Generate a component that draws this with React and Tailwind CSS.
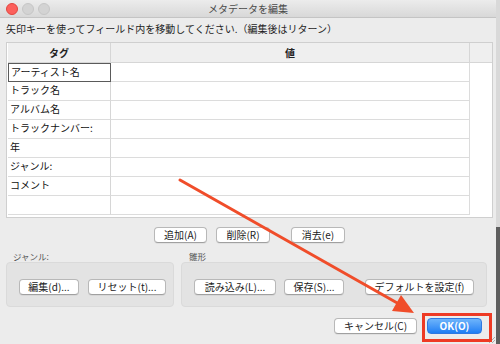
import React from 'react';

const rows = ['アーティスト名', 'トラック名', 'アルバム名', 'トラックナンバー:', '年', 'ジャンル:', 'コメント', ''];

function Btn({ label, className = '' }) {
  return (
    <button
      className={`h-[16px] rounded-[4px] border border-[#b8b8b8] border-b-[#a0a0a0] bg-white text-[10px] leading-none text-[#222] shadow-[0_1px_0_rgba(0,0,0,0.05)] ${className}`}
    >
      {label}
    </button>
  );
}

export default function App() {
  return (
    <div
      className="relative flex h-[344px] w-[500px] overflow-hidden bg-[#ececec]"
      style={{ fontFamily: '"Noto Sans CJK JP", "Noto Sans", sans-serif' }}
    >
      <div className="flex w-[496px] flex-col">
        {/* Title bar */}
        <div className="relative flex h-[18px] items-center rounded-tr-[5px] border-b border-[#c4c4c4] bg-gradient-to-b from-[#ececec] to-[#d8d8d8] pl-[6px]">
          <div className="flex gap-[4px]">
            <span className="h-[12px] w-[12px] rounded-full border border-[#e2463f] bg-[#fc605c]" />
            <span className="h-[12px] w-[12px] rounded-full border border-[#c6c6c6] bg-[#d3d3d3]" />
            <span className="h-[12px] w-[12px] rounded-full border border-[#c6c6c6] bg-[#d3d3d3]" />
          </div>
          <div className="absolute inset-0 flex items-center justify-center text-[10px] text-[#4a4a4a]">
            メタデータを編集
          </div>
        </div>

        {/* Instruction */}
        <div className="mt-[3px] h-[16px] pl-[6px] text-[10px] leading-[16px] text-[#1e1e1e]">
          矢印キーを使ってフィールド内を移動してください.（編集後はリターン）
        </div>

        {/* Table */}
        <div className="ml-[6px] mt-[5px] h-[176px] w-[487px] border border-[#cfcfcf] bg-white pl-px">
          <div className="flex h-[20px] border-b border-[#d6d6d6] bg-[#efefef] text-[10px] font-bold text-[#222]">
            <div className="flex w-[103px] items-center justify-center border-r border-[#d6d6d6]">タグ</div>
            <div className="flex w-[359px] items-center justify-center border-r border-[#d6d6d6]">値</div>
          </div>
          {rows.map((r, i) => (
            <div key={i} className="flex h-[19px] text-[10px] text-[#111]">
              <div
                className={`w-[103px] border-r pl-[2px] leading-[15px] ${
                  i === 0 ? 'border border-[#5a5a5a]' : 'border-b border-[#dcdcdc] border-r-[#d6d6d6]'
                }`}
              >
                {r}
              </div>
              <div className="w-[359px] border-b border-r border-[#dcdcdc]" />
            </div>
          ))}
        </div>

        {/* Table buttons */}
        <div className="mt-[9px] flex h-[16px]">
          <Btn label="追加(A)" className="ml-[154px] w-[53px]" />
          <Btn label="削除(R)" className="ml-[9px] w-[54px]" />
          <Btn label="消去(e)" className="ml-[21px] w-[54px]" />
        </div>

        {/* Groups */}
        <div className="mt-[7px] flex">
          <div className="w-[174px] pl-[6px]">
            <div className="pl-[7px] text-[8.5px] leading-[12px] text-[#555]">ジャンル:</div>
            <div className="flex h-[45px] items-start rounded-[4px] border border-[#dadada] bg-[#e3e3e3] pl-[12px] pt-[16px]">
              <Btn label="編集(d)..." className="w-[60px]" />
              <Btn label="リセット(t)..." className="ml-[9px] w-[78px]" />
            </div>
          </div>
          <div className="ml-[7px] w-[306px]">
            <div className="pl-[8px] text-[8.5px] leading-[12px] text-[#555]">雛形</div>
            <div className="flex h-[45px] items-start rounded-[4px] border border-[#dadada] bg-[#e3e3e3] pl-[12px] pt-[16px]">
              <Btn label="読み込み(L)..." className="w-[82px]" />
              <Btn label="保存(S)..." className="ml-[8px] w-[60px]" />
              <Btn label="デフォルトを設定(f)" className="ml-[21px] w-[109px]" />
            </div>
          </div>
        </div>

        {/* Bottom buttons */}
        <div className="mt-[11px] flex h-[16px]">
          <Btn label="キャンセル(C)" className="ml-[334px] w-[83px]" />
          <button className="ml-[10px] h-[16px] w-[55px] rounded-[4px] border border-[#2f78e0] bg-gradient-to-b from-[#6db4fb] to-[#1c7ef4] text-[10px] font-semibold leading-none text-white">
            OK(O)
          </button>
        </div>
      </div>

      {/* right edge of screen behind window */}
      <div className="flex w-[4px] flex-col">
        <div className="h-[227px] bg-[#d9d9d9]" />
        <div className="flex-1 bg-[#5e5e5e]" />
      </div>

      {/* resize grip */}
      <svg className="absolute bottom-[1px] left-[488px]" width="7" height="7" viewBox="0 0 7 7">
        <path d="M1 7 L7 1 M4 7 L7 4" stroke="#9a9a9a" strokeWidth="0.8" />
      </svg>

      {/* annotation overlay */}
      <div className="absolute left-[422px] top-[313px] h-[29px] w-[70px] border-[3px] border-[#ee3a24]" />
      <svg className="pointer-events-none absolute left-0 top-0" width="500" height="344">
        <line x1="180" y1="180" x2="399" y2="304" stroke="#f04d2a" strokeWidth="3" strokeLinecap="round" />
        <polygon points="414,313 392,311 401,295" fill="#f04d2a" />
      </svg>
    </div>
  );
}
